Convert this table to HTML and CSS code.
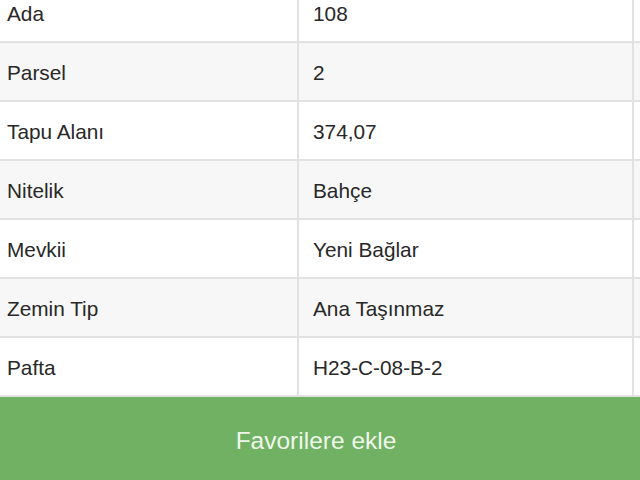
FILE: index.html
```html
<!DOCTYPE html>
<html lang="tr">
<head>
<meta charset="utf-8">
<link rel="stylesheet" href="styles.css">
</head>
<body>
<div class="page">
  <div class="table">
    <div class="row"><div class="key">Ada</div><div class="val">108</div><div class="tail"></div></div>
    <div class="row alt"><div class="key">Parsel</div><div class="val">2</div><div class="tail"></div></div>
    <div class="row"><div class="key">Tapu Alanı</div><div class="val">374,07</div><div class="tail"></div></div>
    <div class="row alt"><div class="key">Nitelik</div><div class="val">Bahçe</div><div class="tail"></div></div>
    <div class="row"><div class="key">Mevkii</div><div class="val">Yeni Bağlar</div><div class="tail"></div></div>
    <div class="row alt"><div class="key">Zemin Tip</div><div class="val">Ana Taşınmaz</div><div class="tail"></div></div>
    <div class="row"><div class="key">Pafta</div><div class="val">H23-C-08-B-2</div><div class="tail"></div></div>
  </div>
  <div class="fav">Favorilere ekle</div>
</div>
</body>
</html>
```

FILE: styles.css
```css
* { box-sizing: border-box; }
html, body {
  margin: 0;
  padding: 0;
  background: #ffffff;
  overflow: hidden;
}
body {
  width: 640px;
  height: 480px;
  font-family: "Liberation Sans", Arial, sans-serif;
  color: #282828;
}
.page {
  display: flex;
  flex-direction: column;
  margin-top: -16px;
}
.table {
  display: flex;
  flex-direction: column;
}
.row {
  display: grid;
  grid-template-columns: 299px 335px 1fr;
  height: 59px;
  border-bottom: 2px solid #e2e2e2;
  background: #ffffff;
}
.row.alt {
  background: #f7f7f7;
}
.key, .val {
  display: flex;
  align-items: center;
  font-size: 20.8px;
  padding-top: 2px;
  border-right: 2px solid #e2e2e2;
}
.key {
  padding-left: 7px;
}
.val {
  padding-left: 14px;
}
.fav {
  height: 90px;
  background: #70b163;
  color: #eef7ea;
  font-size: 24.5px;
  display: flex;
  align-items: center;
  justify-content: center;
  padding-bottom: 2px;
  padding-right: 8px;
}
```
